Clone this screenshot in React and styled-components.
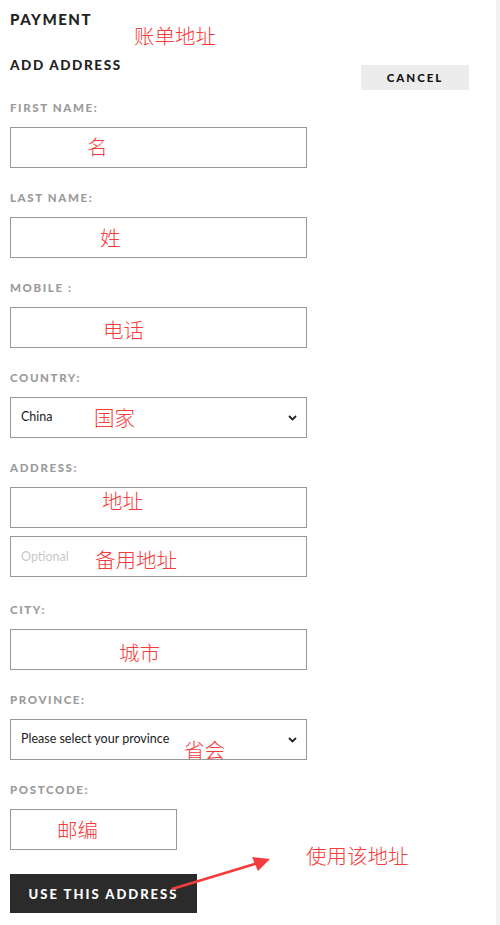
import React from 'react';
import styled, { createGlobalStyle } from 'styled-components';

const GlobalStyle = createGlobalStyle`
    html, body {
        margin: 0;
        padding: 0;
        background: #fff;
    }
    body {
        font-family: Lato, "Liberation Sans", Arial, sans-serif;
        color: #222;
    }
`

const Page = styled.div`
    display: flex;
    width: 500px;
    height: 925px;
    overflow: hidden;
`

const Main = styled.div`
    position: relative;
    flex: 1;
    padding: 10px 0 0 10px;
    box-sizing: border-box;
`

const Gutter = styled.div`
    width: 4px;
    background: #f1f1f1;
`

const Title = styled.div`
    font-size: 15px;
    line-height: 18px;
    font-weight: 900;
    letter-spacing: 1.5px;
    color: #222;
`

const HeaderRow = styled.div`
    display: flex;
    justify-content: space-between;
    align-items: flex-start;
    width: 459px;
    margin-top: 29px;
    margin-bottom: 11px;
`

const SubTitle = styled.div`
    font-size: 13.5px;
    line-height: 16px;
    font-weight: 900;
    letter-spacing: 1.6px;
    color: #222;
`

const CancelButton = styled.button`
    margin-top: 8px;
    width: 108px;
    height: 25px;
    border: none;
    background: #ececec;
    font-family: inherit;
    font-size: 11.5px;
    font-weight: 900;
    letter-spacing: 2px;
    color: #111;
    padding: 0;
    cursor: pointer;
`

const Field = styled.div`
    margin-bottom: ${p => p.$gap || 23}px;
`

const Label = styled.label`
    display: block;
    height: 14px;
    line-height: 14px;
    font-size: 11.5px;
    font-weight: 900;
    letter-spacing: 1.6px;
    color: #9b9b9b;
    margin-bottom: 12px;
`

const Input = styled.input`
    display: block;
    box-sizing: border-box;
    width: ${p => p.$width || 297}px;
    height: 41px;
    border: 1px solid #999;
    border-radius: 0;
    padding: 0 10px;
    font-family: inherit;
    font-size: 12.5px;
    color: #222;
    outline: none;
    margin-top: ${p => p.$top || 0}px;

    &::placeholder {
        color: #c8c8c8;
    }
`

const SelectWrap = styled.div`
    position: relative;
    width: 297px;
`

const Select = styled.select`
    display: block;
    box-sizing: border-box;
    width: 100%;
    height: 41px;
    border: 1px solid #999;
    border-radius: 0;
    padding: 0 10px 2px 10px;
    background: #fff;
    font-family: inherit;
    font-size: 12.5px;
    color: #222;
    appearance: none;
    outline: none;
`

const Chevron = styled.svg`
    position: absolute;
    right: 10px;
    top: 18px;
    pointer-events: none;
`

const SubmitButton = styled.button`
    display: block;
    width: 187px;
    height: 39px;
    border: none;
    background: #2b2b2b;
    color: #fff;
    font-family: inherit;
    font-size: 13px;
    font-weight: 900;
    letter-spacing: 2px;
    padding: 0;
    margin-top: 1px;
    cursor: pointer;
`

const Note = styled.div`
    position: absolute;
    left: ${p => p.$x}px;
    top: ${p => p.$y}px;
    font-family: "Noto Sans CJK SC", sans-serif;
    font-weight: 300;
    font-size: 20.5px;
    line-height: 22px;
    color: #f53b3b;
    white-space: nowrap;
    pointer-events: none;
`

const Arrow = styled.svg`
    position: absolute;
    left: 160px;
    top: 848px;
    pointer-events: none;
`

const notes = [
    { text: '账单地址', x: 134, y: 24 },
    { text: '名', x: 87, y: 135 },
    { text: '姓', x: 100, y: 226 },
    { text: '电话', x: 103, y: 318 },
    { text: '国家', x: 94, y: 406 },
    { text: '地址', x: 102, y: 489 },
    { text: '备用地址', x: 95, y: 548 },
    { text: '城市', x: 119, y: 641 },
    { text: '省会', x: 184, y: 738 },
    { text: '邮编', x: 57, y: 818 },
    { text: '使用该地址', x: 306, y: 844 },
]

const ChevronIcon = () => (
    <Chevron width="9" height="6" viewBox="0 0 9 6">
        <path d="M1 1 L4.5 4.5 L8 1" fill="none" stroke="#222" strokeWidth="1.8" />
    </Chevron>
)

const App = () => {
    return (
        <Page>
            <GlobalStyle />
            <Main>
                <Title>PAYMENT</Title>
                <HeaderRow>
                    <SubTitle>ADD ADDRESS</SubTitle>
                    <CancelButton>CANCEL</CancelButton>
                </HeaderRow>

                <Field>
                    <Label>FIRST NAME:</Label>
                    <Input />
                </Field>
                <Field>
                    <Label>LAST NAME:</Label>
                    <Input />
                </Field>
                <Field>
                    <Label>MOBILE :</Label>
                    <Input />
                </Field>
                <Field>
                    <Label>COUNTRY:</Label>
                    <SelectWrap>
                        <Select defaultValue="China">
                            <option>China</option>
                        </Select>
                        <ChevronIcon />
                    </SelectWrap>
                </Field>
                <Field $gap={26}>
                    <Label>ADDRESS:</Label>
                    <Input />
                    <Input $top={8} placeholder="Optional" />
                </Field>
                <Field>
                    <Label>CITY:</Label>
                    <Input />
                </Field>
                <Field>
                    <Label>PROVINCE:</Label>
                    <SelectWrap>
                        <Select defaultValue="">
                            <option value="">Please select your province</option>
                        </Select>
                        <ChevronIcon />
                    </SelectWrap>
                </Field>
                <Field $gap={24}>
                    <Label>POSTCODE:</Label>
                    <Input $width={167} />
                </Field>
                <SubmitButton>USE THIS ADDRESS</SubmitButton>

                {notes.map((n, ix) => (
                    <Note key={ix} $x={n.x} $y={n.y}>{n.text}</Note>
                ))}

                <Arrow width="120" height="50" viewBox="0 0 120 50">
                    <path d="M12 41 L98 15" stroke="#f53b3b" strokeWidth="2.5" fill="none" />
                    <path d="M110 11 L92 9 L95 16 L98 23 Z" fill="#f53b3b" />
                </Arrow>
            </Main>
            <Gutter />
        </Page>
    )
}

export default App
